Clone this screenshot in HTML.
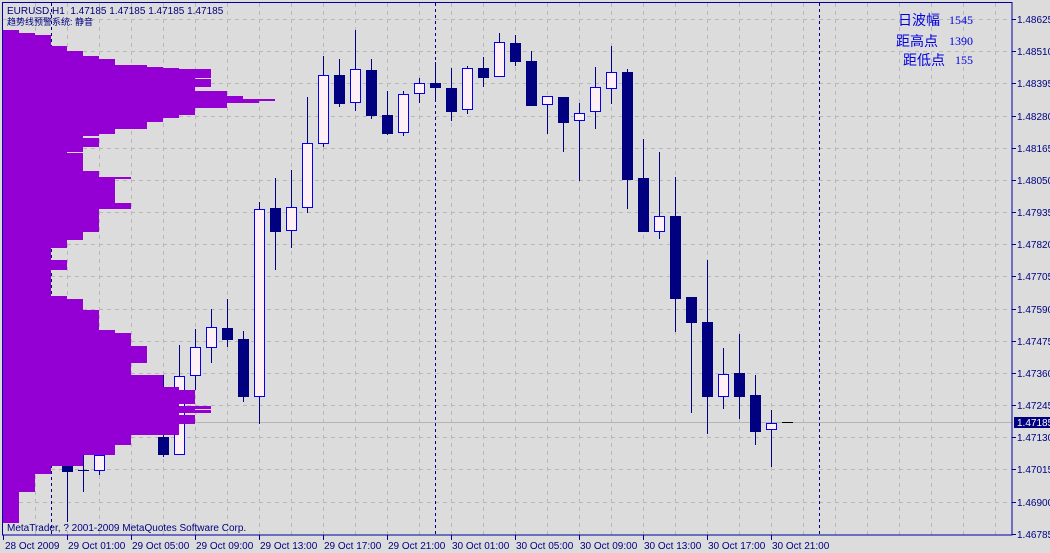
<!DOCTYPE html>
<html><head><meta charset="utf-8"><style>
html,body{margin:0;padding:0;background:#dcdcdc;}
svg{display:block;}
text{font-family:"Liberation Sans","Noto Sans CJK SC",sans-serif;}
text.num{font-family:"Liberation Serif",serif;}
</style></head><body>
<svg width="1050" height="553" viewBox="0 0 1050 553" xmlns="http://www.w3.org/2000/svg">
<rect x="0" y="0" width="1050" height="553" fill="#dcdcdc"/>
<g stroke="#b8b8b8" stroke-width="1" stroke-dasharray="4,4" fill="none">
<path d="M35.5 3V535M67.5 3V535M99.5 3V535M131.5 3V535M163.5 3V535M195.5 3V535M227.5 3V535M259.5 3V535M291.5 3V535M323.5 3V535M355.5 3V535M387.5 3V535M419.5 3V535M451.5 3V535M483.5 3V535M515.5 3V535M547.5 3V535M579.5 3V535M611.5 3V535M643.5 3V535M675.5 3V535M707.5 3V535M739.5 3V535M771.5 3V535M803.5 3V535M835.5 3V535M867.5 3V535M899.5 3V535M931.5 3V535M963.5 3V535M995.5 3V535"/>
<path d="M3 19.5H1012M3 51.5H1012M3 83.5H1012M3 116.5H1012M3 148.5H1012M3 180.5H1012M3 212.5H1012M3 244.5H1012M3 276.5H1012M3 309.5H1012M3 341.5H1012M3 373.5H1012M3 405.5H1012M3 437.5H1012M3 469.5H1012M3 502.5H1012"/>
</g>
<path d="M3 422.5H1012" stroke="#b4b4b4" stroke-width="1"/>
<g stroke="#000080" stroke-width="1" stroke-dasharray="3,3">
<path d="M51.5 3V535M435.5 3V535M819.5 3V535"/>
</g>
<g>
<g fill="#000080">
<rect x="67" y="440" width="1" height="82"/><rect x="62" y="466" width="11" height="6"/>
<rect x="83" y="453" width="1" height="39"/><rect x="78" y="470" width="11" height="1"/>
<rect x="99" y="440" width="1" height="35"/>
<rect x="163" y="375" width="1" height="82"/><rect x="158" y="437" width="11" height="18"/>
<rect x="179" y="345" width="1" height="110"/>
<rect x="195" y="329" width="1" height="61"/>
<rect x="211" y="309" width="1" height="54"/>
<rect x="227" y="299" width="1" height="48"/><rect x="222" y="328" width="11" height="12"/>
<rect x="243" y="331" width="1" height="71"/><rect x="238" y="339" width="11" height="58"/>
<rect x="259" y="202" width="1" height="222"/>
<rect x="275" y="178" width="1" height="92"/><rect x="270" y="208" width="11" height="24"/>
<rect x="291" y="170" width="1" height="78"/>
<rect x="307" y="97" width="1" height="116"/>
<rect x="323" y="56" width="1" height="91"/>
<rect x="339" y="59" width="1" height="48"/><rect x="334" y="75" width="11" height="29"/>
<rect x="355" y="30" width="1" height="81"/>
<rect x="371" y="59" width="1" height="60"/><rect x="366" y="70" width="11" height="46"/>
<rect x="387" y="91" width="1" height="44"/><rect x="382" y="115" width="11" height="19"/>
<rect x="403" y="91" width="1" height="45"/>
<rect x="419" y="78" width="1" height="25"/>
<rect x="435" y="62" width="1" height="39"/><rect x="430" y="83" width="11" height="5"/>
<rect x="451" y="68" width="1" height="53"/><rect x="446" y="88" width="11" height="24"/>
<rect x="467" y="66" width="1" height="48"/>
<rect x="483" y="57" width="1" height="30"/><rect x="478" y="68" width="11" height="10"/>
<rect x="499" y="33" width="1" height="44"/>
<rect x="515" y="35" width="1" height="31"/><rect x="510" y="43" width="11" height="19"/>
<rect x="531" y="51" width="1" height="55"/><rect x="526" y="61" width="11" height="45"/>
<rect x="547" y="96" width="1" height="38"/>
<rect x="563" y="97" width="1" height="55"/><rect x="558" y="97" width="11" height="26"/>
<rect x="579" y="103" width="1" height="78"/>
<rect x="595" y="67" width="1" height="62"/>
<rect x="611" y="46" width="1" height="58"/>
<rect x="627" y="69" width="1" height="140"/><rect x="622" y="72" width="11" height="108"/>
<rect x="643" y="139" width="1" height="93"/><rect x="638" y="178" width="11" height="54"/>
<rect x="659" y="152" width="1" height="87"/>
<rect x="675" y="177" width="1" height="155"/><rect x="670" y="216" width="11" height="83"/>
<rect x="691" y="297" width="1" height="116"/><rect x="686" y="297" width="11" height="26"/>
<rect x="707" y="260" width="1" height="174"/><rect x="702" y="322" width="11" height="75"/>
<rect x="723" y="348" width="1" height="61"/>
<rect x="739" y="334" width="1" height="85"/><rect x="734" y="373" width="11" height="24"/>
<rect x="755" y="375" width="1" height="70"/><rect x="750" y="395" width="11" height="37"/>
<rect x="771" y="410" width="1" height="57"/>
</g>
<g fill="#fff0f5" stroke="#0000ee" stroke-width="1">
<rect x="94.5" y="455.5" width="10" height="15"/>
<rect x="174.5" y="376.5" width="10" height="78"/>
<rect x="190.5" y="347.5" width="10" height="28"/>
<rect x="206.5" y="327.5" width="10" height="20"/>
<rect x="254.5" y="209.5" width="10" height="187"/>
<rect x="286.5" y="207.5" width="10" height="23"/>
<rect x="302.5" y="143.5" width="10" height="64"/>
<rect x="318.5" y="75.5" width="10" height="68"/>
<rect x="350.5" y="69.5" width="10" height="33"/>
<rect x="398.5" y="94.5" width="10" height="38"/>
<rect x="414.5" y="83.5" width="10" height="10"/>
<rect x="462.5" y="68.5" width="10" height="41"/>
<rect x="494.5" y="42.5" width="10" height="34"/>
<rect x="542.5" y="96.5" width="10" height="8"/>
<rect x="574.5" y="113.5" width="10" height="7"/>
<rect x="590.5" y="87.5" width="10" height="24"/>
<rect x="606.5" y="72.5" width="10" height="16"/>
<rect x="654.5" y="216.5" width="10" height="15"/>
<rect x="718.5" y="374.5" width="10" height="22"/>
<rect x="766.5" y="423.5" width="10" height="6"/>
</g>
<rect x="782" y="422" width="11" height="1" fill="#000"/>
</g>
<g fill="#9400d3">
<rect x="3" y="30" width="16" height="3"/>
<rect x="3" y="33" width="32" height="2"/>
<rect x="3" y="35" width="48" height="11"/>
<rect x="3" y="46" width="64" height="5"/>
<rect x="3" y="51" width="80" height="5"/>
<rect x="3" y="56" width="96" height="3"/>
<rect x="3" y="59" width="112" height="6"/>
<rect x="3" y="65" width="144" height="2"/>
<rect x="3" y="67" width="160" height="1"/>
<rect x="3" y="68" width="176" height="1"/>
<rect x="3" y="69" width="208" height="9"/>
<rect x="3" y="78" width="192" height="1"/>
<rect x="3" y="79" width="208" height="8"/>
<rect x="3" y="87" width="192" height="4"/>
<rect x="3" y="91" width="224" height="5"/>
<rect x="3" y="96" width="240" height="3"/>
<rect x="3" y="99" width="256" height="4"/>
<rect x="3" y="99" width="272" height="2"/>
<rect x="3" y="103" width="224" height="5"/>
<rect x="3" y="108" width="192" height="7"/>
<rect x="3" y="115" width="176" height="3"/>
<rect x="3" y="118" width="160" height="4"/>
<rect x="3" y="122" width="144" height="7"/>
<rect x="3" y="129" width="112" height="5"/>
<rect x="3" y="134" width="96" height="2"/>
<rect x="3" y="136" width="80" height="2"/>
<rect x="3" y="138" width="96" height="9"/>
<rect x="3" y="147" width="80" height="5"/>
<rect x="3" y="152" width="64" height="1"/>
<rect x="3" y="153" width="80" height="18"/>
<rect x="3" y="171" width="96" height="6"/>
<rect x="3" y="177" width="128" height="2"/>
<rect x="3" y="179" width="112" height="24"/>
<rect x="3" y="203" width="128" height="6"/>
<rect x="3" y="209" width="96" height="23"/>
<rect x="3" y="232" width="80" height="8"/>
<rect x="3" y="240" width="64" height="8"/>
<rect x="3" y="248" width="48" height="12"/>
<rect x="3" y="260" width="64" height="10"/>
<rect x="3" y="270" width="48" height="26"/>
<rect x="3" y="296" width="64" height="3"/>
<rect x="3" y="299" width="80" height="11"/>
<rect x="3" y="310" width="96" height="20"/>
<rect x="3" y="330" width="112" height="3"/>
<rect x="3" y="333" width="128" height="13"/>
<rect x="3" y="346" width="144" height="17"/>
<rect x="3" y="363" width="128" height="12"/>
<rect x="3" y="375" width="160" height="12"/>
<rect x="3" y="387" width="176" height="3"/>
<rect x="3" y="390" width="192" height="14"/>
<rect x="3" y="404" width="176" height="2"/>
<rect x="3" y="406" width="208" height="3"/>
<rect x="3" y="409" width="192" height="1"/>
<rect x="3" y="410" width="208" height="3"/>
<rect x="3" y="413" width="176" height="2"/>
<rect x="3" y="415" width="192" height="9"/>
<rect x="3" y="424" width="176" height="11"/>
<rect x="3" y="435" width="128" height="10"/>
<rect x="3" y="445" width="112" height="10"/>
<rect x="3" y="455" width="80" height="11"/>
<rect x="3" y="466" width="48" height="8"/>
<rect x="3" y="474" width="32" height="18"/>
<rect x="3" y="492" width="16" height="31"/>
</g>
<rect x="2.5" y="2.5" width="1009.5" height="532.5" fill="none" stroke="#0000a0" stroke-width="1"/>
<g stroke="#0000a0"><path d="M1012 19.5h4M1012 51.5h4M1012 83.5h4M1012 116.5h4M1012 148.5h4M1012 180.5h4M1012 212.5h4M1012 244.5h4M1012 276.5h4M1012 309.5h4M1012 341.5h4M1012 373.5h4M1012 405.5h4M1012 437.5h4M1012 469.5h4M1012 502.5h4M1012 534.5h4"/>
<path d="M3.5 535v5M67.5 535v5M131.5 535v5M195.5 535v5M259.5 535v5M323.5 535v5M387.5 535v5M451.5 535v5M515.5 535v5M579.5 535v5M643.5 535v5M707.5 535v5M771.5 535v5"/></g>
<g font-size="10" fill="#000080">
<text x="1017" y="23">1.48625</text>
<text x="1017" y="55">1.48510</text>
<text x="1017" y="87">1.48395</text>
<text x="1017" y="120">1.48280</text>
<text x="1017" y="152">1.48165</text>
<text x="1017" y="184">1.48050</text>
<text x="1017" y="216">1.47935</text>
<text x="1017" y="248">1.47820</text>
<text x="1017" y="280">1.47705</text>
<text x="1017" y="313">1.47590</text>
<text x="1017" y="345">1.47475</text>
<text x="1017" y="377">1.47360</text>
<text x="1017" y="409">1.47245</text>
<text x="1017" y="441">1.47130</text>
<text x="1017" y="473">1.47015</text>
<text x="1017" y="506">1.46900</text>
<text x="1017" y="538">1.46785</text>
</g>
<rect x="1014" y="417" width="36" height="11" fill="#000080"/>
<text x="1017" y="426" font-size="10" fill="#fff">1.47185</text>
<g font-size="10" fill="#000080">
<text x="5" y="549">28 Oct 2009</text>
<text x="68" y="549">29 Oct 01:00</text>
<text x="132" y="549">29 Oct 05:00</text>
<text x="196" y="549">29 Oct 09:00</text>
<text x="260" y="549">29 Oct 13:00</text>
<text x="324" y="549">29 Oct 17:00</text>
<text x="388" y="549">29 Oct 21:00</text>
<text x="452" y="549">30 Oct 01:00</text>
<text x="516" y="549">30 Oct 05:00</text>
<text x="580" y="549">30 Oct 09:00</text>
<text x="644" y="549">30 Oct 13:00</text>
<text x="708" y="549">30 Oct 17:00</text>
<text x="772" y="549">30 Oct 21:00</text>
</g>
<text x="7" y="14" font-size="10" fill="#000080" xml:space="preserve">EURUSD,H1  1.47185 1.47185 1.47185 1.47185</text>
<text x="7" y="25" font-size="9" fill="#000080">趋势线预警系统: 静音</text>
<text x="7" y="531" font-size="10" fill="#000080">MetaTrader, ? 2001-2009 MetaQuotes Software Corp.</text>
<g fill="#0000e0">
<text x="898" y="25" font-size="14">日波幅</text>
<text class="num" x="949" y="24" font-size="12">1545</text>
<text x="896" y="46" font-size="14">距高点</text>
<text class="num" x="949" y="45" font-size="12">1390</text>
<text x="903" y="65" font-size="14">距低点</text>
<text class="num" x="955" y="64" font-size="12">155</text>
</g>
</svg>
</body></html>
